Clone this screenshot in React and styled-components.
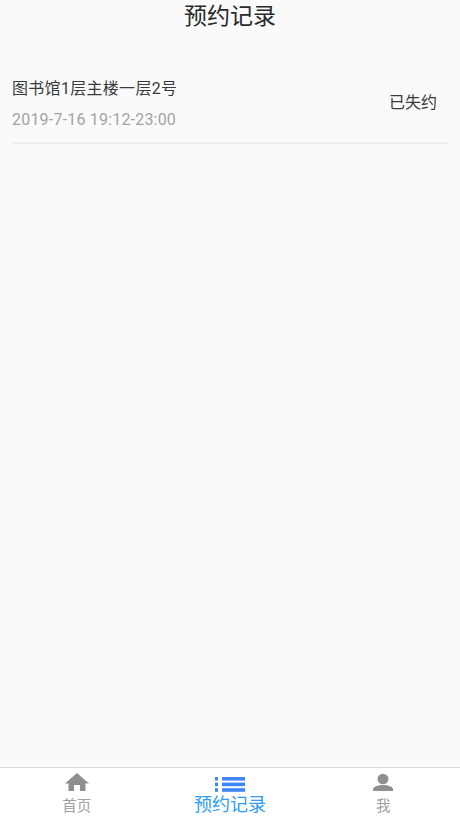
import React from "react";
import styled, { createGlobalStyle } from "styled-components";

const GlobalStyle = createGlobalStyle`
  html, body {
    margin: 0;
    padding: 0;
    height: 100%;
    background: #fafafa;
    font-family: Roboto, "Noto Sans CJK SC", sans-serif;
  }
  #root {
    height: 100%;
  }
`;

const Page = styled.div`
  display: flex;
  flex-direction: column;
  width: 460px;
  height: 818px;
  overflow: hidden;
  background: #fafafa;
`;

const Title = styled.h1`
  margin: 0;
  padding-top: 1px;
  height: 31px;
  line-height: 31px;
  text-align: center;
  font-size: 23px;
  font-weight: 400;
  color: #2a2a2a;
`;

const List = styled.div`
  flex: 1;
  padding: 32px 12px 0;
`;

const Record = styled.div`
  display: flex;
  align-items: center;
  justify-content: space-between;
  height: 78px;
  padding-right: 11px;
  border-bottom: 2px solid #eeeef1;
`;

const Info = styled.div`
  display: flex;
  flex-direction: column;
  gap: 9px;
  margin-top: 2px;
`;

const Place = styled.div`
  font-size: 16px;
  line-height: 22px;
  letter-spacing: 0.3px;
  color: #3a3a3a;
`;

const Time = styled.div`
  font-size: 16px;
  line-height: 22px;
  letter-spacing: 0.2px;
  color: #a3a3a3;
`;

const Status = styled.div`
  font-size: 16px;
  line-height: 22px;
  color: #3a3a3a;
`;

const TabBar = styled.nav`
  display: grid;
  grid-template-columns: repeat(3, 1fr);
  height: 50px;
  background: #fff;
  border-top: 1px solid #dcdcdc;
`;

const Tab = styled.div`
  display: flex;
  flex-direction: column;
  align-items: center;
  padding-top: 4px;
  color: ${(p) => (p.$active ? "#2c9cf5" : "#a0a0a0")};
  font-size: ${(p) => (p.$active ? "18px" : "14.5px")};
  line-height: ${(p) => (p.$active ? "20px" : "18px")};
`;

const IconBox = styled.svg`
  display: block;
  width: ${(p) => (p.$active ? "30px" : "26px")};
  height: 22px;
  margin-bottom: ${(p) => (p.$active ? "1px" : "4px")};
`;

function HomeIcon() {
  return (
    <IconBox viewBox="0 0 26 22">
      <path d="M13 1 L1 11.5 H4.5 V19 H10 V13 H16 V19 H21.5 V11.5 H25 Z" fill="#8f8f8f" />
    </IconBox>
  );
}

function ListIcon() {
  const rows = [5, 10.6, 16.2];
  return (
    <IconBox $active viewBox="0 0 30 22">
      <g fill="#3f86f7">
        {rows.map((y) => (
          <React.Fragment key={y}>
            <rect x="0" y={y} width="3" height="3.6" />
            <rect x="7" y={y} width="23" height="3.6" />
          </React.Fragment>
        ))}
      </g>
    </IconBox>
  );
}

function UserIcon() {
  return (
    <IconBox viewBox="0 0 26 22">
      <g fill="#8f8f8f">
        <ellipse cx="13" cy="7" rx="5.5" ry="5.2" />
        <path d="M3 19 V17.5 C3 14.5 8 13 13 13 C18 13 23 14.5 23 17.5 V19 Z" />
      </g>
    </IconBox>
  );
}

export default function App() {
  return (
    <Page>
      <GlobalStyle />
      <Title>预约记录</Title>
      <List>
        <Record>
          <Info>
            <Place>图书馆1层主楼一层2号</Place>
            <Time>2019-7-16 19:12-23:00</Time>
          </Info>
          <Status>已失约</Status>
        </Record>
      </List>
      <TabBar>
        <Tab>
          <HomeIcon />
          首页
        </Tab>
        <Tab $active>
          <ListIcon />
          预约记录
        </Tab>
        <Tab>
          <UserIcon />
          我
        </Tab>
      </TabBar>
    </Page>
  );
}
